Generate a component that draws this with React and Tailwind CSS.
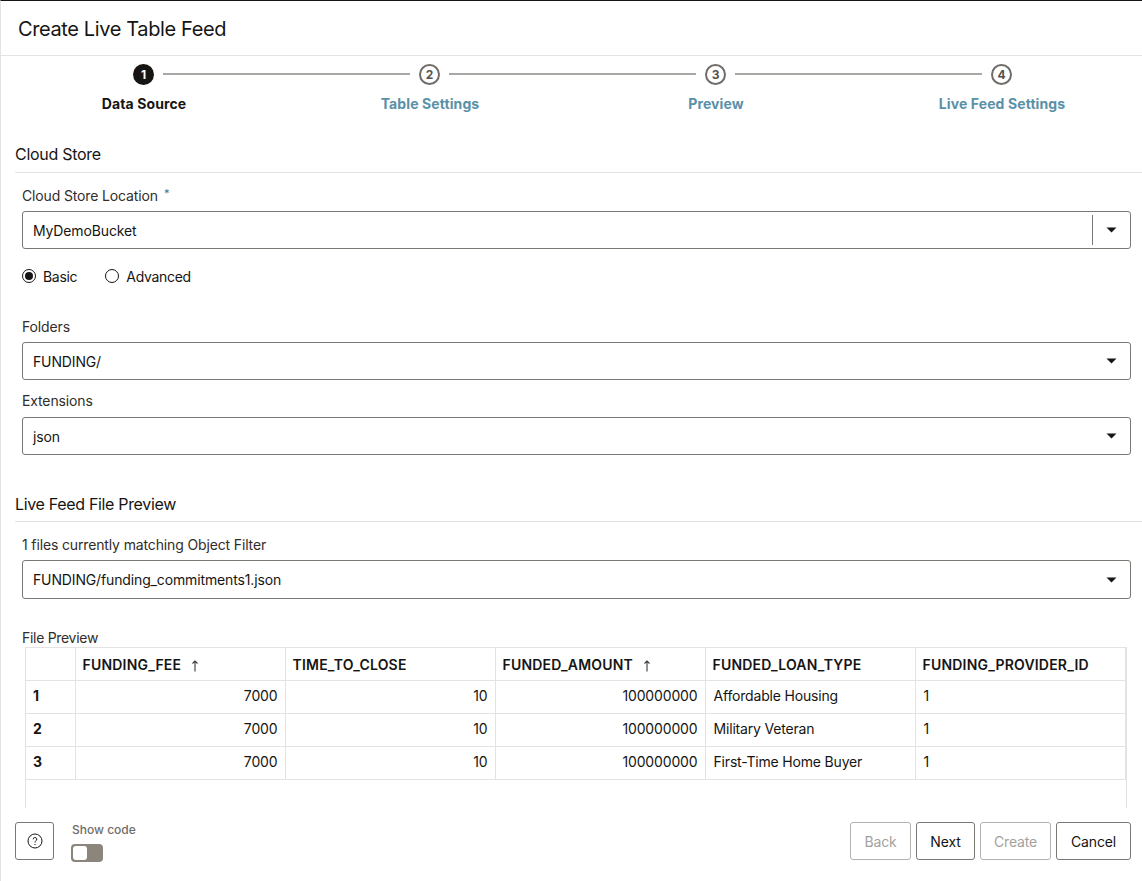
import React from 'react';

const font = { fontFamily: 'Inter, "Liberation Sans", sans-serif' };

const steps = ['Data Source', 'Table Settings', 'Preview', 'Live Feed Settings'];

const rows = [
  ['1', '7000', '10', '100000000', 'Affordable Housing', '1'],
  ['2', '7000', '10', '100000000', 'Military Veteran', '1'],
  ['3', '7000', '10', '100000000', 'First-Time Home Buyer', '1'],
];

const Caret = () => (
  <svg width="11" height="6" viewBox="0 0 11 6" className="shrink-0">
    <path d="M0.5 0.5h10L5.5 5.5z" fill="#161513" />
  </svg>
);

const Select = ({ value, divider, className }) => (
  <div className={`ml-[21px] mr-[11px] flex h-[38px] items-center rounded-[3px] border border-[#7b7874] bg-white pl-[10px] pr-[13px] text-[14px] text-[#161513] ${className || ''}`}>
    <span className="flex-1">{value}</span>
    {divider && <span className="mr-[13px] h-[30px] w-px bg-[#7b7874]" />}
    <Caret />
  </div>
);

const SortArrow = () => (
  <svg width="8" height="12" viewBox="0 0 8 12" className="ml-[10px] inline-block">
    <path d="M4 11.5V1M1.5 3.5L4 1l2.5 2.5" fill="none" stroke="#3d3b38" strokeWidth="1.1" />
  </svg>
);

const Step = ({ n, active }) => (
  <span className={`flex h-[21px] w-[21px] shrink-0 items-center justify-center rounded-full text-[12px] font-bold ${active ? 'bg-[#161513] text-white' : 'border-2 border-[#6f6c69] text-[#55524f]'}`}>
    {n}
  </span>
);

const Line = () => <span className="mx-[9px] -mt-px h-[2px] w-[247px] bg-[#aaa8a5]" />;

const Radio = ({ label, checked }) => (
  <label className="flex items-center gap-[7px] text-[14px] tracking-[-0.3px] text-[#161513]">
    <span className="flex h-[14px] w-[14px] items-center justify-center rounded-full border border-[#161513]">
      {checked && <span className="h-[8px] w-[8px] rounded-full bg-[#161513]" />}
    </span>
    {label}
  </label>
);

const FooterButton = ({ children, disabled, className }) => (
  <button className={`h-[38px] rounded-[3px] border text-[14px] ${disabled ? 'border-[#b5b3b0] text-[#a3a19e]' : 'border-[#7b7874] text-[#161513]'} ${className}`}>
    {children}
  </button>
);

export default function App() {
  return (
    <div style={font} className="h-[881px] w-[1142px] overflow-hidden border-t border-l border-t-[#161513] border-l-[#e4e3e1] bg-white tracking-[-0.14px]">
      {/* header */}
      <div className="flex h-[55px] items-center border-b border-[#e4e3e1] pl-[17px] pt-px text-[20px] tracking-[-0.38px] text-[#161513]">
        Create Live Table Feed
      </div>

      {/* stepper */}
      <div className="flex items-center pl-[132px] pt-[8px]">
        <Step n="1" active />
        <Line />
        <Step n="2" />
        <Line />
        <Step n="3" />
        <Line />
        <Step n="4" />
      </div>
      <div className="mt-[9px] grid grid-cols-[repeat(4,286px)] text-center text-[14px] leading-[20px] font-bold tracking-[0.1px]">
        {steps.map((s, i) => (
          <span key={s} className={i === 0 ? 'text-[#161513]' : 'text-[#5a90a8]'}>{s}</span>
        ))}
      </div>

      {/* cloud store */}
      <div className="ml-[14px] mt-[28px] h-[31px] border-b border-[#e4e3e1] text-[16px] leading-[24px] tracking-[-0.28px] text-[#161513]">Cloud Store</div>
      <div className="ml-[21px] mt-[13px] flex h-[20px] text-[14px] leading-[20px] text-[#312d2a]">
        Cloud Store Location
        <span className="ml-[6px] -mt-[3px] text-[11px] text-[#2d7a99]">*</span>
      </div>
      <Select value="MyDemoBucket" divider className="mt-[5px]" />
      <div className="ml-[21px] mt-[17px] flex h-[20px] items-center gap-[28px]">
        <Radio label="Basic" checked />
        <Radio label="Advanced" />
      </div>

      <div className="ml-[21px] mt-[31px] h-[20px] text-[14px] leading-[20px] text-[#312d2a]">Folders</div>
      <Select value="FUNDING/" className="mt-[5px]" />
      <div className="ml-[21px] mt-[11px] h-[20px] text-[14px] leading-[20px] text-[#312d2a]">Extensions</div>
      <Select value="json" className="mt-[6px]" />

      {/* file preview */}
      <div className="ml-[14px] mt-[37px] h-[30px] border-b border-[#e4e3e1] text-[16px] leading-[24px] tracking-[-0.33px] text-[#161513]">Live Feed File Preview</div>
      <div className="ml-[21px] mt-[13px] h-[20px] text-[14px] leading-[20px] text-[#312d2a]">1 files currently matching Object Filter</div>
      <Select value="FUNDING/funding_commitments1.json" className="mt-[5px] !h-[39px]" />
      <div className="ml-[21px] mt-[29px] h-[20px] text-[14px] leading-[20px] tracking-[-0.3px] text-[#312d2a]">File Preview</div>

      <div className="ml-[24px] -mt-[1px] h-[161px] w-[1102px] border-x border-t border-[#e4e3e1]">
        <table className="w-[1099px] table-fixed border-collapse text-[14px] text-[#161513]">
          <colgroup>
            <col className="w-[49px]" />
            <col className="w-[210px]" />
            <col className="w-[210px]" />
            <col className="w-[210px]" />
            <col className="w-[210px]" />
            <col className="w-[210px]" />
          </colgroup>
          <thead>
            <tr className="h-[32px] border-b border-[#e4e3e1] text-left text-[14px] tracking-[0.2px]">
              <th className="border-r border-[#e4e3e1]" />
              <th className="border-r border-[#e4e3e1] pl-[7px] pt-px font-semibold">FUNDING_FEE<SortArrow /></th>
              <th className="border-r border-[#e4e3e1] pl-[7px] pt-px font-semibold">TIME_TO_CLOSE</th>
              <th className="border-r border-[#e4e3e1] pl-[7px] pt-px font-semibold">FUNDED_AMOUNT<SortArrow /></th>
              <th className="border-r border-[#e4e3e1] pl-[7px] pt-px font-semibold">FUNDED_LOAN_TYPE</th>
              <th className="border-r border-[#e4e3e1] pl-[7px] pt-px font-semibold">FUNDING_PROVIDER_ID</th>
            </tr>
          </thead>
          <tbody>
            {rows.map((r) => (
              <tr key={r[0]} className="h-[33px] border-b border-[#e4e3e1]">
                <td className="border-r border-[#e4e3e1] pb-[3px] pl-[7px] font-bold">{r[0]}</td>
                <td className="border-r border-[#e4e3e1] pb-[3px] pr-[7px] text-right">{r[1]}</td>
                <td className="border-r border-[#e4e3e1] pb-[3px] pr-[7px] text-right">{r[2]}</td>
                <td className="border-r border-[#e4e3e1] pb-[3px] pr-[7px] text-right">{r[3]}</td>
                <td className="border-r border-[#e4e3e1] pb-[3px] pl-[8px] tracking-[-0.18px]">{r[4]}</td>
                <td className="border-r border-[#e4e3e1] pb-[3px] pl-[8px]">{r[5]}</td>
              </tr>
            ))}
          </tbody>
        </table>
      </div>

      {/* footer */}
      <div className="ml-[14px] mr-[11px] mt-[14px] flex items-start">
        <button className="flex h-[38px] w-[39px] items-center justify-center rounded-[3px] border border-[#7b7874]">
          <svg width="16" height="16" viewBox="0 0 16 16" fill="none" stroke="#161513" strokeWidth="1">
            <circle cx="8" cy="8" r="7" />
            <path d="M6.2 6.3a1.8 1.8 0 1 1 2.6 1.6c-.5.3-.8.6-.8 1.2v.4" />
            <path d="M8 11v1" />
          </svg>
        </button>
        <div className="ml-[18px]">
          <div className="h-[15px] text-[12px] leading-[15px] font-medium tracking-normal text-[#6f6c69]">Show code</div>
          <div className="-ml-px mt-[7px] flex h-[18px] w-[32px] items-center rounded-[4px] bg-[#8b857c] pl-[2px]">
            <span className="h-[14px] w-[14px] rounded-[3px] bg-white" />
          </div>
        </div>
        <div className="ml-auto flex gap-[5px]">
          <FooterButton disabled className="w-[61px]">Back</FooterButton>
          <FooterButton className="w-[59px]">Next</FooterButton>
          <FooterButton disabled className="w-[71px]">Create</FooterButton>
          <FooterButton className="w-[75px]">Cancel</FooterButton>
        </div>
      </div>
    </div>
  );
}
